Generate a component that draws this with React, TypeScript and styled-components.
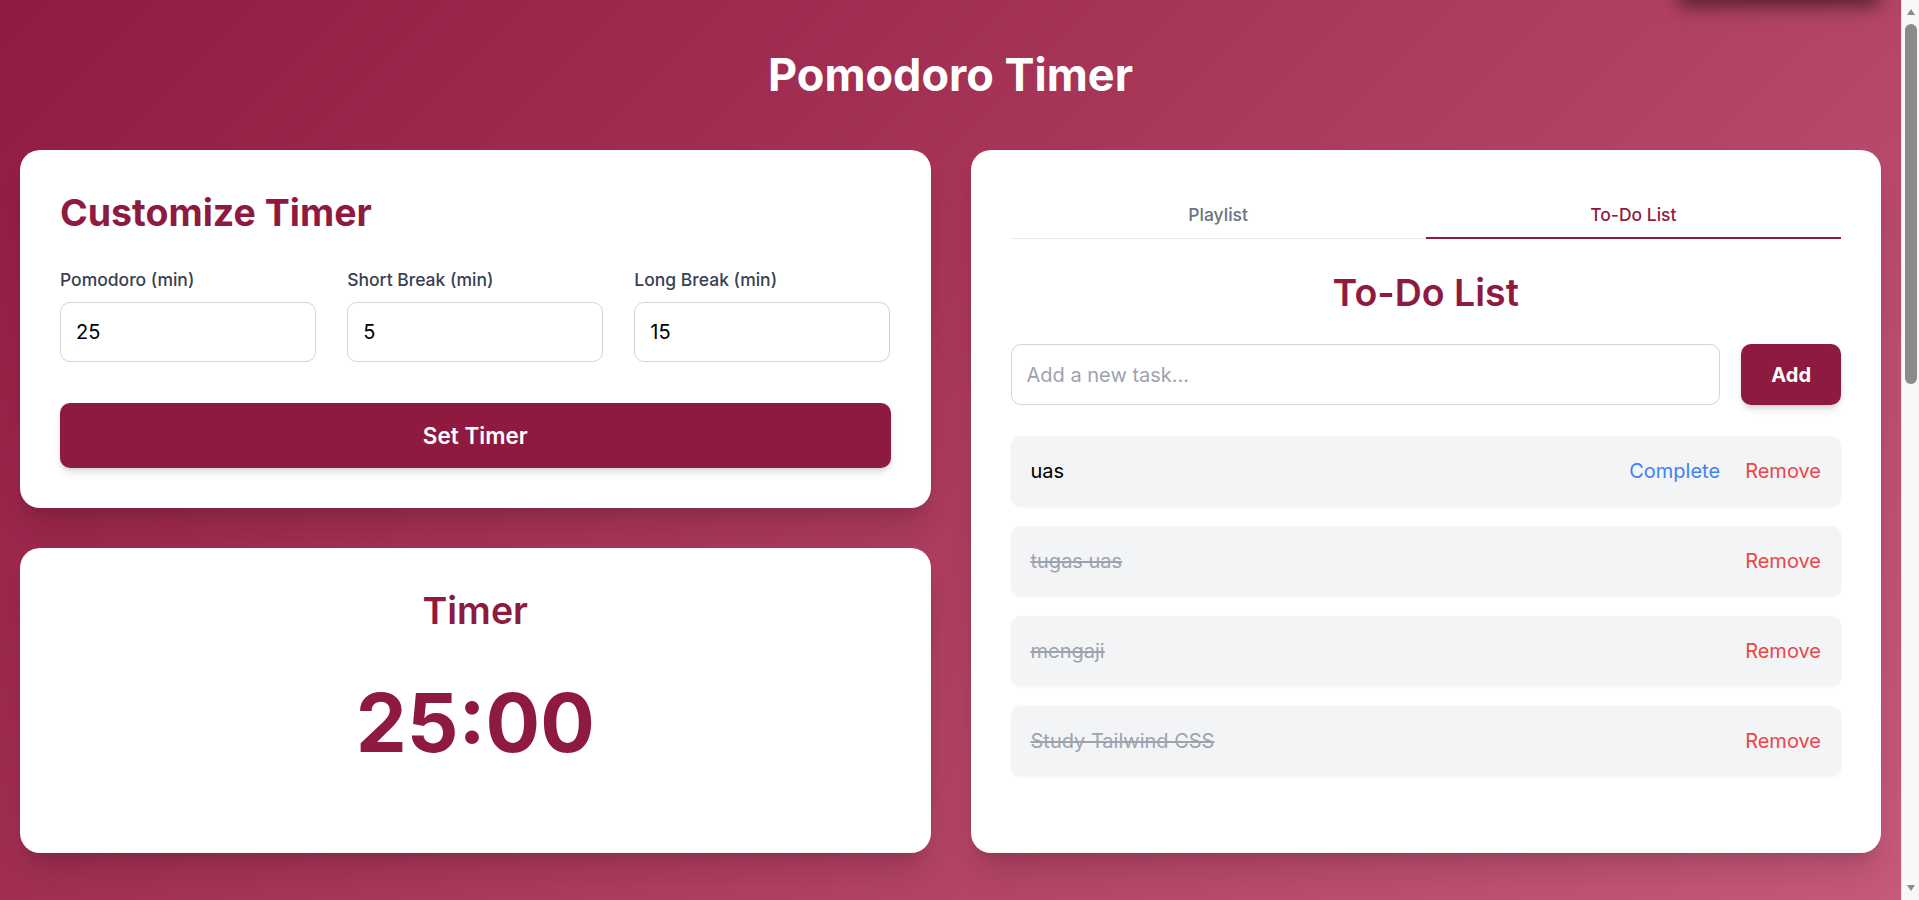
import React from 'react';
import styled, { createGlobalStyle } from 'styled-components';

const GlobalStyle = createGlobalStyle`
  html, body {
    margin: 0;
    padding: 0;
  }
  body {
    font-family: Inter, "Noto Sans", sans-serif;
    background: linear-gradient(135deg, #901a40 0%, #ab3a5c 50%, #c65a7b 100%);
    background-attachment: fixed;
    min-height: 100vh;
  }
  * {
    box-sizing: border-box;
  }
`;

const brand = '#8f1a3f';

type Task = { id: number; text: string; done: boolean };

const tasks: Task[] = [
  { id: 1, text: 'uas', done: false },
  { id: 2, text: 'tugas uas', done: true },
  { id: 3, text: 'mengaji', done: true },
  { id: 4, text: 'Study Tailwind CSS', done: true },
];

const fields = [
  { label: 'Pomodoro (min)', value: '25' },
  { label: 'Short Break (min)', value: '5' },
  { label: 'Long Break (min)', value: '15' },
];

const App: React.FC = () => {
  return (
    <>
      <GlobalStyle />
      <Page>
        <PageTitle>Pomodoro Timer</PageTitle>
        <Columns>
          <LeftColumn>
            <Card>
              <SettingsTitle>Customize Timer</SettingsTitle>
              <FieldGrid>
                {fields.map((f) => (
                  <Field key={f.label}>
                    <Label>{f.label}</Label>
                    <NumberInput type="number" defaultValue={f.value} />
                  </Field>
                ))}
              </FieldGrid>
              <PrimaryButton>Set Timer</PrimaryButton>
            </Card>
            <TimerCard>
              <SectionTitle>Timer</SectionTitle>
              <TimeDisplay>25:00</TimeDisplay>
            </TimerCard>
          </LeftColumn>

          <Card>
            <Tabs>
              <Tab>Playlist</Tab>
              <Tab active>To-Do List</Tab>
            </Tabs>
            <TodoTitle>To-Do List</TodoTitle>
            <AddRow>
              <TaskInput placeholder="Add a new task..." />
              <AddButton>Add</AddButton>
            </AddRow>
            <TaskList>
              {tasks.map((t) => (
                <TaskItem key={t.id}>
                  <TaskText done={t.done}>{t.text}</TaskText>
                  <Actions>
                    {!t.done && <ActionLink color="#3b82f6">Complete</ActionLink>}
                    <ActionLink color="#ef4444">Remove</ActionLink>
                  </Actions>
                </TaskItem>
              ))}
            </TaskList>
          </Card>
        </Columns>
      </Page>
      <OffscreenShadow />
      <ScrollTrack>
        <ScrollArrow viewBox="0 0 10 8">
          <path d="M5 1 L9 7 L1 7 Z" fill="#8a8a8a" />
        </ScrollArrow>
        <ScrollThumb />
        <ScrollArrow viewBox="0 0 10 8">
          <path d="M1 1 L9 1 L5 7 Z" fill="#8a8a8a" />
        </ScrollArrow>
      </ScrollTrack>
    </>
  );
};

export default App;

const Page = styled.div`
  padding: 50px 38px 50px 20px;
`;

const PageTitle = styled.h1`
  margin: 0 0 50px;
  text-align: center;
  color: #fff;
  font-size: 45px;
  line-height: 50px;
  font-weight: 700;
`;

const Columns = styled.div`
  display: grid;
  grid-template-columns: minmax(0, 1fr) minmax(0, 1fr);
  gap: 40px;
  align-items: stretch;
`;

const LeftColumn = styled.div`
  display: flex;
  flex-direction: column;
  gap: 40px;
  min-width: 0;
`;

const Card = styled.section`
  background: #fff;
  border-radius: 20px;
  padding: 40px;
  min-width: 0;
  box-shadow: 0 25px 31px -6px rgba(0, 0, 0, 0.12), 0 10px 12px -7px rgba(0, 0, 0, 0.1);
`;

const TimerCard = styled(Card)`
  padding-bottom: 89px;
  text-align: center;
`;

const SettingsTitle = styled.h2`
  margin: 0 0 32px;
  color: ${brand};
  font-size: 37.5px;
  line-height: 45px;
  font-weight: 700;
`;

const SectionTitle = styled.h2`
  margin: 0 0 50px;
  color: ${brand};
  font-size: 37.5px;
  line-height: 45px;
  font-weight: 600;
`;

const FieldGrid = styled.div`
  display: grid;
  grid-template-columns: repeat(3, minmax(0, 1fr));
  gap: 31px;
`;

const Field = styled.label`
  display: flex;
  flex-direction: column;
  min-width: 0;
`;

const Label = styled.span`
  color: #374151;
  font-size: 17.5px;
  line-height: 25px;
  font-weight: 500;
  margin-bottom: 10px;
`;

const NumberInput = styled.input`
  width: 100%;
  min-width: 0;
  height: 60px;
  padding: 0 15px;
  border: 1px solid #d1d5db;
  border-radius: 10px;
  font-family: inherit;
  font-size: 20px;
  color: #000;
  outline: none;
  -moz-appearance: textfield;
  &::-webkit-outer-spin-button,
  &::-webkit-inner-spin-button {
    -webkit-appearance: none;
    margin: 0;
  }
`;

const PrimaryButton = styled.button`
  display: block;
  width: 100%;
  margin-top: 41px;
  height: 65px;
  border: none;
  border-radius: 10px;
  background: ${brand};
  color: #fff;
  font-family: inherit;
  font-size: 22.5px;
  font-weight: 600;
  box-shadow: 0 5px 8px -1px rgba(0, 0, 0, 0.12), 0 3px 5px -2px rgba(0, 0, 0, 0.1);
  cursor: pointer;
`;

const TimeDisplay = styled.div`
  color: ${brand};
  font-size: 81px;
  line-height: 1;
  font-weight: 700;
`;

const Tabs = styled.div`
  display: flex;
  border-bottom: 1px solid #e5e7eb;
`;

const Tab = styled.button<{ active?: boolean }>`
  flex: 1;
  padding: 12px 0 10px;
  margin-bottom: -1px;
  background: none;
  border: none;
  border-bottom: 2px solid ${(p) => (p.active ? brand : 'transparent')};
  color: ${(p) => (p.active ? brand : '#6b7280')};
  font-family: inherit;
  font-size: 17.5px;
  line-height: 25px;
  font-weight: 500;
  cursor: pointer;
`;

const TodoTitle = styled.h2`
  margin: 31px 0 29px;
  text-align: center;
  color: ${brand};
  font-size: 37.5px;
  line-height: 45px;
  font-weight: 600;
`;

const AddRow = styled.div`
  display: flex;
  gap: 21px;
`;

const TaskInput = styled.input`
  flex: 1;
  min-width: 0;
  height: 61px;
  padding: 0 15px;
  border: 1px solid #d1d5db;
  border-radius: 10px;
  font-family: inherit;
  font-size: 20px;
  outline: none;
  &::placeholder {
    color: #9ca3af;
  }
`;

const AddButton = styled.button`
  height: 61px;
  padding: 0 30px;
  border: none;
  border-radius: 10px;
  background: ${brand};
  color: #fff;
  font-family: inherit;
  font-size: 20px;
  font-weight: 700;
  box-shadow: 0 5px 8px -1px rgba(0, 0, 0, 0.12), 0 3px 5px -2px rgba(0, 0, 0, 0.1);
  cursor: pointer;
`;

const TaskList = styled.ul`
  list-style: none;
  margin: 31px 0 0;
  padding: 0;
  display: flex;
  flex-direction: column;
  gap: 20px;
`;

const TaskItem = styled.li`
  display: flex;
  align-items: center;
  justify-content: space-between;
  height: 70px;
  padding: 0 20px;
  background: #f3f4f6;
  border-radius: 10px;
  box-shadow: 0 1px 3px rgba(0, 0, 0, 0.06);
`;

const TaskText = styled.span<{ done?: boolean }>`
  font-size: 20px;
  color: ${(p) => (p.done ? '#9ca3af' : '#000')};
  text-decoration: ${(p) => (p.done ? 'line-through' : 'none')};
`;

const Actions = styled.div`
  display: flex;
  gap: 25px;
`;

const ActionLink = styled.button<{ color: string }>`
  padding: 0;
  background: none;
  border: none;
  color: ${(p) => p.color};
  font-family: inherit;
  font-size: 20px;
  cursor: pointer;
`;

const OffscreenShadow = styled.div`
  position: fixed;
  top: -70px;
  right: 40px;
  width: 200px;
  height: 70px;
  background: #7a2a44;
  box-shadow: 0 6px 18px rgba(0, 0, 0, 0.55);
`;

const ScrollTrack = styled.div`
  position: fixed;
  top: 0;
  right: 0;
  bottom: 0;
  width: 18px;
  background: #f8f8f8;
  border-left: 1px solid #e6e6e6;
  display: flex;
  flex-direction: column;
  align-items: center;
  padding: 4px 0;
`;

const ScrollArrow = styled.svg`
  width: 10px;
  height: 8px;
  margin: 4px 0;
`;

const ScrollThumb = styled.div`
  width: 12px;
  height: 360px;
  margin-top: 4px;
  margin-bottom: auto;
  border-radius: 6px;
  background: #8a8a8a;
`;
